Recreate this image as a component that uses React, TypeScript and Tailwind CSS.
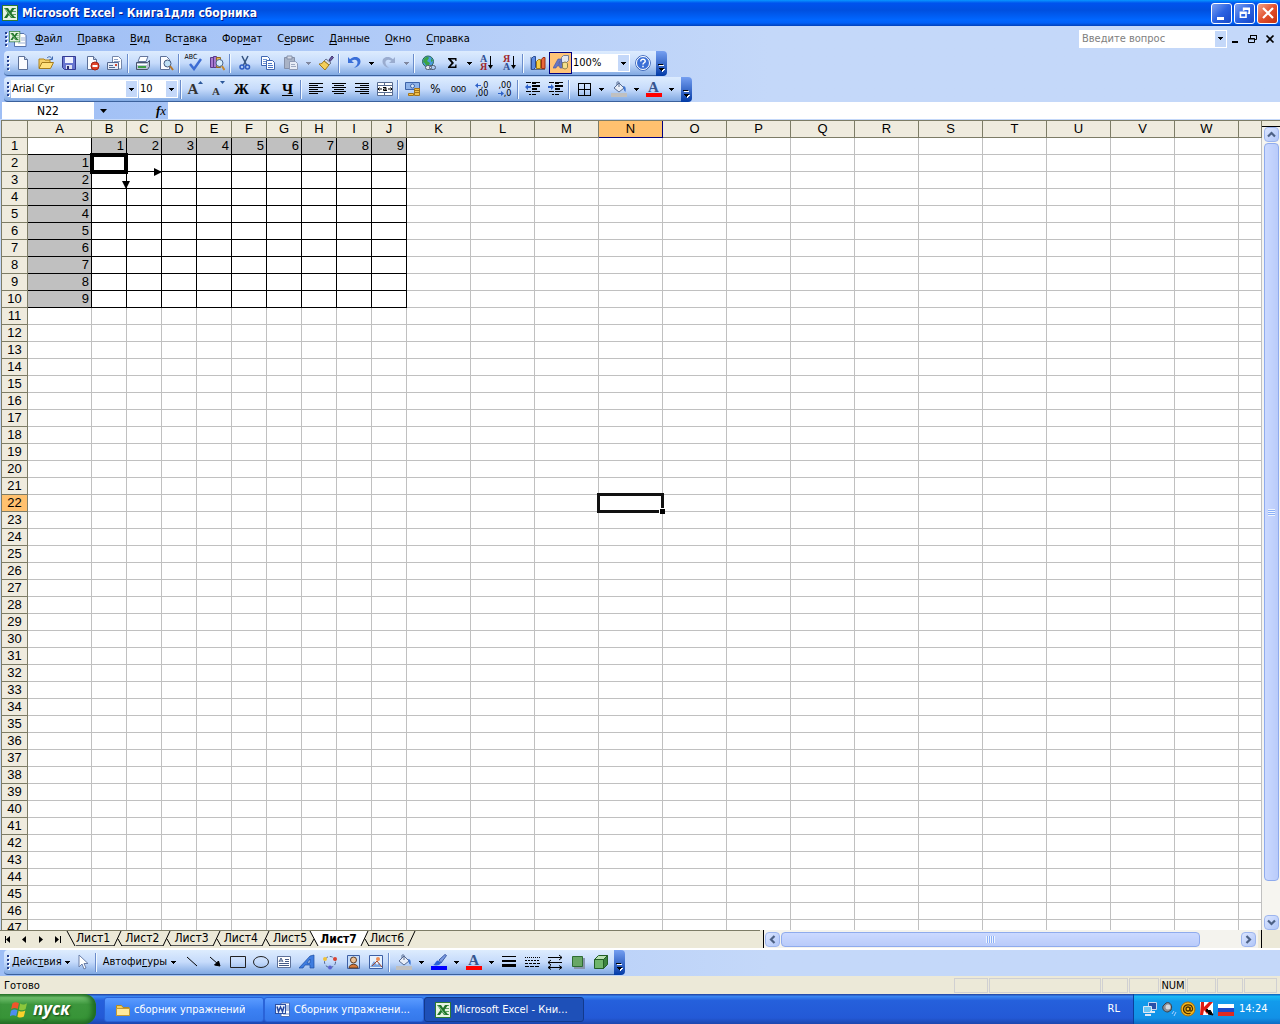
import type { ReactNode } from "react";

const columns = "ABCDEFGHIJKLMNOPQRSTUVWX".split("");
const rows = Array.from({ length: 47 }, (_, i) => i + 1);

// [text before the key, underlined key, text after it]
const menus = [
  ["", "Ф", "айл"],
  ["", "П", "равка"],
  ["", "В", "ид"],
  ["Вст", "а", "вка"],
  ["Фор", "м", "ат"],
  ["С", "е", "рвис"],
  ["", "Д", "анные"],
  ["", "О", "кно"],
  ["", "С", "правка"],
];

const sheets = ["Лист1", "Лист2", "Лист3", "Лист4", "Лист5", "Лист7", "Лист6"];

/* ---------- small building blocks ---------- */

function Icon({ children, size = "w-4 h-4", box = "0 0 16 16" }: { children: ReactNode; size?: string; box?: string }) {
  return (
    <svg className={`${size} shrink-0`} viewBox={box} fill="none" aria-hidden="true">
      {children}
    </svg>
  );
}

function Tool({ label, children, active }: { label: string; children: ReactNode; active?: boolean }) {
  return (
    <button
      aria-label={label}
      className={`flex h-[22px] w-[23px] shrink-0 items-center justify-center ${active ? "border border-[#000080] bg-[#ffc477]" : ""}`}
    >
      {children}
    </button>
  );
}

function Arrow({ label, dim }: { label: string; dim?: boolean }) {
  return (
    <button aria-label={label} className="flex h-[22px] w-3 shrink-0 items-center justify-center">
      <Caret color={dim ? "#8088a0" : "#000"} />
    </button>
  );
}

function Caret({ color = "#000" }: { color?: string }) {
  return (
    <svg width="5" height="3" viewBox="0 0 5 3" shapeRendering="crispEdges" aria-hidden="true">
      <path d="M0 0h5v1H0zM1 1h3v1H1zM2 2h1v1H2z" fill={color} />
    </svg>
  );
}

function Sep() {
  return <span className="ml-px mr-0.5 h-[19px] w-0.5 shrink-0 border-l border-[#6a8ccb] bg-[#f1f9ff]" />;
}

function Grip() {
  return (
    <svg width="7" height="20" viewBox="0 0 7 20" className="shrink-0" shapeRendering="crispEdges" aria-hidden="true">
      {[3, 7, 11, 15].map((y) => (
        <g key={y}>
          <path d={`M4 ${y + 1}h2v2h-2z`} fill="#fff" />
          <path d={`M3 ${y}h2v2h-2z`} fill="#27418f" />
        </g>
      ))}
    </svg>
  );
}

function Bar({ label, children }: { label: string; children: ReactNode }) {
  return (
    <div role="toolbar" aria-label={label} className="ml-1 flex h-[25px] w-fit">
      <div className="flex items-center rounded-l border-b border-[#3b619c] bg-gradient-to-b from-[#ddecfe] via-[#c6dbfb] to-[#81a9e2]">
        <Grip />
        {children}
      </div>
      <button
        aria-label="Параметры панелей инструментов"
        className="flex w-[11px] items-end justify-center rounded-r bg-gradient-to-b from-[#759ff1] to-[#003aa6] pb-1"
      >
        <svg width="7" height="8" viewBox="0 0 7 8" shapeRendering="crispEdges" aria-hidden="true">
          <path d="M1 1h5v1H1zM2 5h5v1H6v1H5v1H4V7H3V6H2z" fill="#fff" />
          <path d="M0 0h5v1H0zM1 4h5v1H5v1H4v1H3V6H2V5H1z" fill="#000" />
        </svg>
      </button>
    </div>
  );
}

function Combo({ label, value, width }: { label: string; value: string; width: string }) {
  return (
    <div className={`mr-px flex h-[18px] shrink-0 items-stretch border border-white bg-white ${width}`}>
      <select aria-label={label} className="min-w-0 flex-1 appearance-none bg-white leading-4 text-black">
        <option>{value}</option>
      </select>
      <span className="flex w-[11px] items-center justify-center bg-[#c4d8f9]">
        <Caret />
      </span>
    </div>
  );
}

/* ---------- icons ---------- */

const ExcelMark = () => (
  <>
    <rect x=".5" y=".5" width="15" height="15" fill="#e6f3e2" stroke="#2c7a35" />
    <path d="M10 3.500h4M10 6.500h4M11 9.500h3M10 12.500h4" stroke="#5da361" />
    <path d="M2 3h4l2 3 2-3h3L9.500 8l4 5H9L7 10l-2 3H2l3.500-5z" fill="#21752b" />
    <path d="M3 3.500l7 9" stroke="#8cc98e" />
  </>
);

const WordMark = () => (
  <>
    <path d="M6 1h8.500v13.500H6z" fill="#fff" stroke="#4a6db8" />
    <path d="M11 4h3M11 6h3M11 8h3M8 12h6" stroke="#6787c8" />
    <rect x=".5" y="2.500" width="10" height="9" fill="#e8effc" stroke="#2b4fa2" />
    <path d="M2 4.500l1.500 5L5.500 5l2 4.500 1.500-5" stroke="#2346a0" strokeWidth="1.500" />
  </>
);

const Page = () => (
  <>
    <path d="M3.500 1.500h6l3 3v10h-9z" fill="#fbfcff" stroke="#5c7098" />
    <path d="M9.500 1.500v3h3" fill="#c6d3ea" stroke="#5c7098" />
  </>
);

const Folder = () => (
  <>
    <path d="M1 13V4h5l1 1h5v3" fill="#f5d069" stroke="#b0821a" />
    <path d="M1 13.500L4 7.500h11.500l-3 6z" fill="#ffe07c" stroke="#a37b1c" />
    <path d="M9 3c2-2 4-1.500 5 1M14.500 1.500V4.500H11.500" stroke="#3d69b0" />
  </>
);

const Disk = () => (
  <>
    <path d="M1.500 1.500h13v13h-11l-2-2z" fill="#6775cf" stroke="#343b92" />
    <path d="M4 2h8v6H4z" fill="#eef1ff" />
    <path d="M5 10h6v4H5z" fill="#dfe2f2" />
    <path d="M6 11h2v3H6z" fill="#2b2f6f" />
  </>
);

const Denied = () => (
  <>
    <Page />
    <circle cx="11" cy="11" r="4" fill="#e2452b" stroke="#a32112" />
    <path d="M8.500 11h5" stroke="#fff" strokeWidth="2" />
  </>
);

const Mail = () => (
  <>
    <path d="M5.500 1.500h6l3 3V14h-9z" fill="#fff" stroke="#7486a8" />
    <path d="M7 4.500h4M7 6.500h6" stroke="#8fa2c5" />
    <path d="M.5 7.500h11v7H.5z" fill="#e5ecf8" stroke="#56698f" />
    <path d="M2 12.500h6M2 10.500h4" stroke="#56698f" />
    <path d="M8 9h2v2H8z" fill="#d44c34" />
  </>
);

const Printer = () => (
  <>
    <path d="M5 1.500h8l-2 5H3z" fill="#fff" stroke="#66779c" />
    <path d="M1.500 7.500h11l2-2v6l-2 3h-11z" fill="#b9c4d6" stroke="#46536d" />
    <path d="M2 9.500h10" stroke="#fff" />
    <path d="M3 12h8" stroke="#3f9f43" strokeWidth="2" />
  </>
);

const Preview = () => (
  <>
    <path d="M2.500 1.500h6l3 3v10h-9z" fill="#fbfcff" stroke="#5c7098" />
    <circle cx="9.500" cy="8.500" r="3.500" fill="#bfe0f5" stroke="#44597f" />
    <path d="M12 11l3 4" stroke="#b5762a" strokeWidth="2" />
  </>
);

const Spell = () => <path d="M4 9l4 5 7-10" stroke="#3d6cd3" strokeWidth="2.500" />;

const Research = () => (
  <>
    <path d="M1.500 2.500h3v10h-3zM4.500 1.500h3v11h-3z" fill="#a779cf" stroke="#5a3a8c" />
    <path d="M7.500 2.500h4v10h-4z" fill="#e7b657" stroke="#946d1e" />
    <circle cx="10.500" cy="8" r="3.500" fill="#d7edfb" stroke="#4b648c" />
    <path d="M13 11l2.500 4" stroke="#c8882c" strokeWidth="2" />
  </>
);

const Cut = () => (
  <>
    <path d="M5 1l4.500 9M11 1L6.500 10" stroke="#34537f" strokeWidth="1.500" />
    <circle cx="5" cy="12" r="2" stroke="#2d5bc0" strokeWidth="1.500" />
    <circle cx="10.500" cy="12" r="2" stroke="#2d5bc0" strokeWidth="1.500" />
  </>
);

const Copy = () => (
  <>
    <path d="M1.500 1.500h6l2 2v7h-8z" fill="#fff" stroke="#3f66b1" />
    <path d="M3 4.500h4M3 6.500h4M3 8.500h4" stroke="#6d92d4" />
    <path d="M6.500 5.500h6l2 2v7h-8z" fill="#fff" stroke="#3f66b1" />
    <path d="M8 8.500h4M8 10.500h5M8 12.500h5" stroke="#4d78c6" />
  </>
);

const Paste = () => (
  <>
    <path d="M1.500 2.500h10v11h-10z" fill="#a9b3c6" stroke="#8590a8" />
    <path d="M4 1h5v3H4z" fill="#d5dbe7" stroke="#8590a8" />
    <path d="M6.500 6.500h6l2 2v6h-8z" fill="#e8edf6" stroke="#8f9bb5" />
    <path d="M8 9.500h4M8 11.500h5" stroke="#9faac1" />
  </>
);

const Brush = () => (
  <>
    <path d="M11 5l3-4 1.500 1.500L12 6.500z" fill="#6f5ba7" stroke="#41346d" />
    <path d="M8 4l5 4-2 2-5-4z" fill="#d6dbe7" stroke="#6c7790" />
    <path d="M6 6l5 4-4 5-6-6c2 0 4-1 5-3z" fill="#f3cf5b" stroke="#a07a1c" />
  </>
);

const Undo = ({ color }: { color: string }) => (
  <path d="M2 2v6h6L5.500 5.700C9 3.500 12 5 11.500 8c-.3 2-1.500 3.500-3.500 5 4-1 6.500-3.500 6.500-6.500C14.500 2 8.500.5 4 4.200z" fill={color} />
);

const Globe = () => (
  <>
    <circle cx="7" cy="6.500" r="5.500" fill="#4a9be0" stroke="#2b6b59" />
    <path d="M3 4c2-3 5-2 5-1L6 6l3 2-2 4C4 11 5 8 2 7zM10 3l2 3-2 1z" fill="#3ba443" />
    <rect x="4.500" y="10.500" width="6" height="4" rx="2" fill="#dfe5ee" stroke="#4f5c75" />
    <rect x="8.500" y="10.500" width="6" height="4" rx="2" stroke="#4f5c75" />
  </>
);

const Sort = ({ top, bottom, topColor, bottomColor }: { top: string; bottom: string; topColor: string; bottomColor: string }) => (
  <span className="flex items-center gap-px">
    <span className="flex flex-col font-['Liberation_Serif',serif] text-[10px] font-bold leading-[8px]">
      <span style={{ color: topColor }}>{top}</span>
      <span style={{ color: bottomColor }}>{bottom}</span>
    </span>
    <Icon size="w-[5px] h-4" box="0 0 5 16">
      <path d="M2.500 1v11" stroke="#000" />
      <path d="M0 10h5L2.500 14z" fill="#000" />
    </Icon>
  </span>
);

const Chart = () => (
  <>
    <path d="M1 2v12.500h14" stroke="#56688b" />
    <path d="M1.500 3.500l2-2h2v11l-2 2h-2z" fill="#5c8be0" stroke="#2a4c93" />
    <path d="M6.500 6.500l2-2h2v9h-4z" fill="#f6cd48" stroke="#a17a13" />
    <path d="M11.500 4.500l1.500-2h2v11h-3.500z" fill="#e8663a" stroke="#9c3015" />
  </>
);

const Shapes = () => (
  <>
    <path d="M8.500 2.500l2-2h5v5l-2 2h-5z" fill="#e4e6ee" stroke="#777f94" />
    <path d="M0 13L5 4h3l2 9H7l-.5-2H4l-1 2zM5 9h1.500V6.500z" fill="#6878c4" stroke="#4153a3" strokeWidth=".6" fillRule="evenodd" />
    <path d="M9.500 9c0-2.500 5-2.500 5 0v3c0 2.500-5 2.500-5 0z" fill="#f3df8d" stroke="#8d8048" />
  </>
);

const Help = () => (
  <>
    <circle cx="8" cy="8" r="7.300" stroke="#2a56b0" />
    <circle cx="8" cy="8" r="6.500" fill="#3c70d6" stroke="#fff" />
    <path d="M5.800 6.500C5.500 3.500 10.500 3.500 10.200 6.300 10 7.800 8 7.800 8 9.500M8 10.800v1.500" stroke="#fff" strokeWidth="1.500" />
  </>
);

const Lines = ({ d }: { d: string }) => <path d={d} stroke="#000" shapeRendering="crispEdges" />;

const Merge = () => (
  <>
    <path d="M.5 1.500h15v13H.5z" fill="#fff" stroke="#576b8f" />
    <path d="M.5 4.500h15M.5 11.500h15M7.500 1.500v3M7.500 11.500v3" stroke="#576b8f" />
    <path d="M1 8h4M2.500 6.500L1 8l1.500 1.500M15 8h-4M13.500 6.500L15 8l-1.500 1.500" stroke="#000" />
    <path d="M6 6.500h3v3H6.500V8H9M9 9.500h1" stroke="#000" />
  </>
);

const Money = () => (
  <>
    <path d="M.5 1.500h14v7H.5z" fill="#8eb3ea" stroke="#3d63a9" />
    <circle cx="7.500" cy="5" r="2" fill="#dce9fb" stroke="#3d63a9" />
    <path d="M9.500 7.500h5v7h-5zM3.500 12.500h5v2h-5z" fill="#f2c04a" stroke="#a3731a" />
    <path d="M9 9.500h5M9 11.500h5" stroke="#a3731a" />
  </>
);

const Decimals = ({ less }: { less?: boolean }) => (
  <span className="flex flex-col items-end text-[9px] leading-[8px]">
    {[less ? ",00" : ",0", less ? ",0" : ",00"].map((t) => (
      <span key={t} className="flex items-center">
        {t === ",0" && (
          <Icon size="w-1.5 h-[5px]" box="0 0 6 5">
            <path d={less ? "M6 2.500L3 0v2H0v1h3v2z" : "M0 2.500L3 0v2h3v1H3v2z"} fill="#2f62c8" />
          </Icon>
        )}
        {t}
      </span>
    ))}
  </span>
);

const Indent = ({ out }: { out?: boolean }) => (
  <>
    <path d="M1 1.500h5M7 1.500h8M7 4.500h8M7 7.500h5M1 10.500h5M7 10.500h8M7 13.500h4M4 13.500h2" stroke="#000" shapeRendering="crispEdges" />
    <path d="M7 5.500h8M7 2.500h4M7 8.500h5" stroke="#000" shapeRendering="crispEdges" />
    <path d={out ? "M0 6l3-3v2h3v2H3v2z" : "M6 6L3 3v2H0v2h3v2z"} fill="#2f62c8" />
  </>
);

const Bucket = () => (
  <>
    <path d="M3 7l5-5 5 5-5 4z" fill="#e9eef7" stroke="#566a90" />
    <path d="M6 4V1.500c0-1 2-1 2 0V6" stroke="#566a90" />
    <path d="M12 5c3 0 3 3 2.500 6-1-1-2-2-2-4z" fill="#3f76d3" />
    <path d="M0 12h16v4H0z" fill="#c0c0c0" />
  </>
);

const LineColor = () => (
  <>
    <path d="M8 6l6-5.500 1.500 1L10 9z" fill="#7b9be0" stroke="#3a5aa8" />
    <path d="M2 11c2 0 2-4 5-4.500l3 2.500c-1 2.500-5 3-8 2z" fill="#2b63d8" />
    <path d="M0 12h16v4H0z" fill="#00f" />
  </>
);

const FontColor = () => (
  <span className="flex w-4 flex-col items-center">
    <span className="font-['Liberation_Serif',serif] text-[15px] font-bold leading-3 text-[#35558f]">A</span>
    <span className="h-1 w-full bg-[#f00]" />
  </span>
);

const Cube = () => (
  <>
    <path d="M1.500 5.500h9v9h-9z" fill="#6fb56c" stroke="#235f27" />
    <path d="M1.500 5.500l4-4h9l-4 4z" fill="#b9e0b3" stroke="#235f27" />
    <path d="M10.500 5.500l4-4v9l-4 4z" fill="#3c843f" stroke="#235f27" />
  </>
);

const windowPaths = {
  min: "M3 12h7v3H3z",
  restore: "M6 2h9v8h-3V8h1V5H8v1H6zM2 7h9v8H2zm2 3v3h5v-3z",
};

/* ---------- window chrome ---------- */

function TitleBar() {
  const frame = "flex h-[21px] w-[21px] items-center justify-center rounded-[3px] border border-white";
  return (
    <header className="flex h-[26px] shrink-0 items-center bg-[linear-gradient(#0997ff_0%,#0053ee_12%,#0050e0_40%,#0066ff_75%,#0060f8_88%,#0040ba_100%)] pl-0.5 pr-0.5">
      <Icon>
        <ExcelMark />
      </Icon>
      <h1 className="ml-1 flex-1 font-['DejaVu_Sans_Condensed',sans-serif] text-[12px] font-bold text-white [text-shadow:1px_1px_#0a1883]">
        Microsoft Excel - Книга1для сборника
      </h1>
      <div className="flex gap-0.5">
        <button aria-label="Свернуть" className={`${frame} bg-gradient-to-br from-[#7d9ff0] via-[#2b63e2] to-[#1848c8]`}>
          <Icon>
            <path d={windowPaths.min} fill="#fff" />
          </Icon>
        </button>
        <button aria-label="Восстановить" className={`${frame} bg-gradient-to-br from-[#7d9ff0] via-[#2b63e2] to-[#1848c8]`}>
          <Icon>
            <path d={windowPaths.restore} fill="#fff" fillRule="evenodd" transform="translate(1 1) scale(.8)" />
          </Icon>
        </button>
        <button aria-label="Закрыть" className={`${frame} bg-gradient-to-br from-[#f0a084] via-[#e2502c] to-[#c5300c]`}>
          <Icon>
            <path d="M3 3l10 10M13 3L3 13" stroke="#fff" strokeWidth="2.200" />
          </Icon>
        </button>
      </div>
    </header>
  );
}

function MenuBar() {
  return (
    <div className="flex h-[25px] items-center">
      <span className="ml-0.5 flex items-center">
        <Grip />
        <Icon size="w-[18px] h-4" box="0 0 18 16">
          <path d="M8 2.500h7l2 2v11H5.500V10" fill="#fff" stroke="#5673ad" />
          <path d="M12 7h4M12 9h4M9 12h7" stroke="#9db1d6" />
          <g transform="scale(.7)">
            <ExcelMark />
          </g>
        </Icon>
      </span>
      <nav className="ml-2 flex flex-1 gap-[15px]">
        {menus.map(([a, key, b]) => (
          <button key={a + key + b} className="whitespace-nowrap">
            {a}
            <span className="underline underline-offset-2">{key}</span>
            {b}
          </button>
        ))}
      </nav>
      <div className="flex h-[18px] w-[148px] border border-white bg-white">
        <input aria-label="Вопрос" placeholder="Введите вопрос" className="min-w-0 flex-1 px-0.5 placeholder:text-[#808080]" />
        <button aria-label="Список вопросов" className="flex w-[11px] items-center justify-center bg-[#c4d8f9]">
          <Caret />
        </button>
      </div>
      <div className="flex items-center gap-1.5 pl-px pr-1">
        <button aria-label="Свернуть книгу">
          <Icon size="w-3 h-3" box="0 0 12 12">
            <path d="M4 8h6v2H4z" fill="#000" />
          </Icon>
        </button>
        <button aria-label="Восстановить книгу">
          <Icon size="w-3 h-3" box="0 0 12 12">
            <path d="M4.500 5V2.500h6v4H9M4 2.500h7M2.500 5.500h6v4h-6zM2 6h7" stroke="#000" />
          </Icon>
        </button>
        <button aria-label="Закрыть книгу">
          <Icon size="w-3 h-3" box="0 0 12 12">
            <path d="M2.500 2.500l7 7M9.500 2.500l-7 7" stroke="#000" strokeWidth="1.700" />
          </Icon>
        </button>
      </div>
    </div>
  );
}

function StandardBar() {
  return (
    <Bar label="Стандартная">
      <Tool label="Создать"><Icon><Page /></Icon></Tool>
      <Tool label="Открыть"><Icon><Folder /></Icon></Tool>
      <Tool label="Сохранить"><Icon><Disk /></Icon></Tool>
      <Tool label="Разрешения"><Icon><Denied /></Icon></Tool>
      <Tool label="Сообщение"><Icon><Mail /></Icon></Tool>
      <Sep />
      <Tool label="Печать"><Icon><Printer /></Icon></Tool>
      <Tool label="Просмотр"><Icon><Preview /></Icon></Tool>
      <Sep />
      <Tool label="Орфография">
        <span className="relative">
          <Icon><Spell /></Icon>
          <span className="absolute -left-px -top-0.5 text-[7px] leading-[8px]">ABC</span>
        </span>
      </Tool>
      <Tool label="Справочные материалы"><Icon><Research /></Icon></Tool>
      <Sep />
      <Tool label="Вырезать"><Icon><Cut /></Icon></Tool>
      <Tool label="Копировать"><Icon><Copy /></Icon></Tool>
      <Tool label="Вставить"><Icon><Paste /></Icon></Tool>
      <Arrow label="Варианты вставки" dim />
      <Tool label="Формат по образцу"><Icon><Brush /></Icon></Tool>
      <Sep />
      <Tool label="Отменить"><Icon><Undo color="#3a6fd8" /></Icon></Tool>
      <Arrow label="Список отмены" />
      <Tool label="Вернуть">
        <Icon><g transform="matrix(-1 0 0 1 16 0)"><Undo color="#9aaccf" /></g></Icon>
      </Tool>
      <Arrow label="Список возврата" dim />
      <Sep />
      <Tool label="Гиперссылка"><Icon><Globe /></Icon></Tool>
      <Tool label="Автосумма">
        <Icon><path d="M4 3h8.500v3h-1L11 4.500H7L10 8l-3.500 3.500H11l.5-2h1V13H4v-1l3.500-4L4 4z" fill="#000" /></Icon>
      </Tool>
      <Arrow label="Функции" />
      <Tool label="По возрастанию"><Sort top="А" bottom="Я" topColor="#2f4f93" bottomColor="#a0262b" /></Tool>
      <Tool label="По убыванию"><Sort top="Я" bottom="А" topColor="#a0262b" bottomColor="#2f4f93" /></Tool>
      <Sep />
      <Tool label="Диаграмма"><Icon><Chart /></Icon></Tool>
      <Tool label="Рисование" active><Icon><Shapes /></Icon></Tool>
      <Combo label="Масштаб" value="100%" width="w-[58px]" />
      <Tool label="Справка Excel"><Icon><Help /></Icon></Tool>
      <span className="w-0.5" />
    </Bar>
  );
}

function FormattingBar() {
  const letter = "font-['Liberation_Serif',serif] text-[15px] font-bold leading-4";
  return (
    <Bar label="Форматирование">
      <Combo label="Шрифт" value="Arial Cyr" width="w-[127px]" />
      <Combo label="Размер" value="10" width="w-[39px]" />
      <Sep />
      <Tool label="Увеличить размер">
        <span className="flex items-start">
          <span className={`${letter} text-[#333]`}>A</span>
          <Icon size="w-[5px] h-[3px]" box="0 0 5 3"><path d="M2.500 0L5 3H0z" fill="#2b579a" /></Icon>
        </span>
      </Tool>
      <Tool label="Уменьшить размер">
        <span className="flex items-start">
          <span className="pt-1 font-['Liberation_Serif',serif] text-[11px] font-bold leading-3 text-[#333]">A</span>
          <Icon size="w-[5px] h-[3px]" box="0 0 5 3"><path d="M0 0h5L2.500 3z" fill="#2b579a" /></Icon>
        </span>
      </Tool>
      <Tool label="Полужирный"><span className={letter}>Ж</span></Tool>
      <Tool label="Курсив"><span className={`${letter} italic`}>К</span></Tool>
      <Tool label="Подчеркнутый"><span className={`${letter} underline`}>Ч</span></Tool>
      <Sep />
      <Tool label="По левому краю"><Icon><Lines d="M1 2.500h14M1 4.500h9M1 6.500h14M1 8.500h9M1 10.500h14M1 12.500h9" /></Icon></Tool>
      <Tool label="По центру"><Icon><Lines d="M1 2.500h14M3 4.500h10M1 6.500h14M3 8.500h10M1 10.500h14M3 12.500h10" /></Icon></Tool>
      <Tool label="По правому краю"><Icon><Lines d="M1 2.500h14M6 4.500h9M1 6.500h14M6 8.500h9M1 10.500h14M6 12.500h9" /></Icon></Tool>
      <Tool label="Объединить"><Icon><Merge /></Icon></Tool>
      <Sep />
      <Tool label="Денежный формат"><Icon><Money /></Icon></Tool>
      <Tool label="Процентный формат"><span className="text-[12px]">%</span></Tool>
      <Tool label="Формат с разделителями"><span className="font-['Liberation_Sans',sans-serif] text-[9px]">000</span></Tool>
      <Tool label="Увеличить разрядность"><Decimals /></Tool>
      <Tool label="Уменьшить разрядность"><Decimals less /></Tool>
      <Sep />
      <Tool label="Уменьшить отступ"><Icon><Indent out /></Icon></Tool>
      <Tool label="Увеличить отступ"><Icon><Indent /></Icon></Tool>
      <Sep />
      <Tool label="Границы"><Icon><Lines d="M2.500 2.500h12v12h-12zM8.500 2.500v12M2.500 8.500h12" /></Icon></Tool>
      <Arrow label="Виды границ" />
      <Tool label="Цвет заливки"><Icon><Bucket /></Icon></Tool>
      <Arrow label="Цвета заливки" />
      <Tool label="Цвет шрифта"><FontColor /></Tool>
      <Arrow label="Цвета шрифта" />
      <span className="w-1" />
    </Bar>
  );
}

function FormulaBar() {
  return (
    <div className="flex h-[17px] pl-0.5">
      <input aria-label="Имя ячейки" defaultValue="N22" className="w-[92px] bg-white text-center text-[12px]" />
      <button aria-label="Список имен" className="flex w-[18px] items-center justify-center">
        <svg width="7" height="4" viewBox="0 0 7 4" aria-hidden="true"><path d="M0 0h7L3.500 4z" /></svg>
      </button>
      <button aria-label="Вставить функцию" className="w-14 pr-0.5 text-right font-['Liberation_Serif',serif] text-[13px] italic leading-4">
        <b>f</b>x
      </button>
      <input aria-label="Строка формул" className="min-w-0 flex-1 bg-white" />
    </div>
  );
}

/* ---------- sheet ---------- */

function StepArrows() {
  return (
    <svg className="absolute left-0 top-0 z-10 h-[40px] w-[76px] overflow-visible" viewBox="0 0 76 40" aria-hidden="true">
      <path d="M0 0H34V17H0z" fill="none" stroke="#000" strokeWidth="4" />
      <path d="M62 13l8 4-8 4zM30 26h8l-4 8z" fill="#000" />
    </svg>
  );
}

function cellClass(row: number, col: number) {
  if (row > 10 || col > 9) return "border-[#c0c0c0]";
  if (row === 1 && col === 0) return "border-black";
  if (row === 1 || col === 0) return "border-black bg-[#c0c0c0]";
  return "border-black";
}

function cellText(row: number, col: number) {
  if (row === 1 && col > 0 && col < 10) return col;
  if (col === 0 && row > 1 && row < 11) return row - 1;
  return null;
}

function Sheet() {
  const head = "h-[17px] overflow-hidden border-b border-r border-[#7d7c66] p-0 text-center font-normal leading-4";
  return (
    <div className="min-w-0 flex-1 overflow-hidden border-l border-t border-[#7d7c66] bg-white">
      <table className="w-full table-fixed border-separate border-spacing-0 font-['Liberation_Sans',sans-serif] text-[13px]">
        <colgroup>
          <col className="w-[26px]" />
          {columns.map((c, i) => (
            <col key={c} className={i === 23 ? "" : i > 0 && i < 10 ? "w-[35px]" : "w-[64px]"} />
          ))}
        </colgroup>
        <thead>
          <tr>
            <th className={`${head} bg-[#efebde]`} />
            {columns.map((c) => (
              <th key={c} scope="col" className={`${head} ${c === "N" ? "bg-[#ffc16f] border-[#000080]" : "bg-[#efebde]"}`}>
                {c === "X" ? "" : c}
              </th>
            ))}
          </tr>
        </thead>
        <tbody>
          {rows.map((r) => (
            <tr key={r}>
              <th scope="row" className={`${head} ${r === 22 ? "bg-[#ffc16f]" : "bg-[#efebde]"}`}>{r}</th>
              {columns.map((c, i) => (
                <td key={c} className={`relative h-[17px] border-b border-r p-0 pr-0.5 text-right leading-4 ${cellClass(r, i)}`}>
                  {cellText(r, i)}
                  {r === 2 && c === "B" && <StepArrows />}
                  {r === 22 && c === "N" && (
                    <span className="absolute -bottom-0.5 -left-0.5 -right-0.5 -top-0.5 z-10 border-[3px] border-[#111]">
                      <span className="absolute -bottom-1 -right-1 h-1.5 w-1.5 border-l border-t border-white bg-black" />
                    </span>
                  )}
                </td>
              ))}
            </tr>
          ))}
        </tbody>
      </table>
    </div>
  );
}

function ScrollButton({ label, d }: { label: string; d: string }) {
  return (
    <button
      aria-label={label}
      className="flex h-[15px] w-[15px] shrink-0 items-center justify-center rounded-sm border border-[#9db5ee] bg-gradient-to-br from-[#dce6ff] to-[#b0c6f8]"
    >
      <svg width="9" height="9" viewBox="0 0 9 9" fill="none" aria-hidden="true">
        <path d={d} stroke="#4d6185" strokeWidth="2.200" />
      </svg>
    </button>
  );
}

function VerticalScroll() {
  return (
    <div className="flex w-[18px] shrink-0 flex-col items-center border-t border-[#7d7c66] bg-[#f6f5f0]">
      <span className="h-1.5 w-full border-b border-black bg-[#ece9d8]" />
      <ScrollButton label="Вверх" d="M1 6.500L4.500 3 8 6.500" />
      <div className="flex w-[15px] flex-1 flex-col pt-px">
        <div className="flex flex-[737] items-center justify-center rounded-sm border border-[#8fabed] bg-gradient-to-r from-[#cbd9ff] to-[#b9cbfa]">
          <span className="h-[7px] w-[7px] bg-[repeating-linear-gradient(#eef4fe_0_1px,#8cb0f8_1px_2px)]" />
        </div>
        <div className="flex-[34]" />
      </div>
      <ScrollButton label="Вниз" d="M1 2.500L4.500 6 8 2.500" />
    </div>
  );
}

// slanted edge between two tabs; the active tab lies on top of its neighbours
function TabEdge({ on, nextOn }: { on: boolean; nextOn: boolean }) {
  const w = on || nextOn ? 13 : 15;
  return (
    <svg width={w} height="16" viewBox={`0 0 ${w} 16`} fill="none" aria-hidden="true">
      {on && <path d="M0 0h11L4 15H0z" fill="#fff" />}
      {nextOn && <path d="M3 0h10v15h-2z" fill="#fff" />}
      {nextOn ? (
        <>
          <path d="M0 14.500h3" stroke="#555" />
          <path d="M3 0l8 15M3 15l4-7" stroke="#000" />
        </>
      ) : (
        <>
          {!on && <path d="M0 14.500h4" stroke="#555" />}
          <path d={`M11 14.500h${w - 11}`} stroke="#555" />
          <path d="M11 0L4 15M8 8l4 7" stroke="#000" />
        </>
      )}
    </svg>
  );
}

function SheetTabs() {
  const nav = ["M1 0h1v7H1zM6 0v7L2 3.500z", "M5 0v7L1 3.500z", "M2 0v7l4-3.500z", "M6 0h1v7H6zM1 0v7l4-3.500z"];
  const labels = ["Первый лист", "Предыдущий лист", "Следующий лист", "Последний лист"];
  return (
    <div className="flex h-[18px] shrink-0 bg-[#ece9d8]">
      <div className="flex min-w-0 flex-[760] border-t border-[#7d7c66]">
        <div className="flex w-[66px] shrink-0">
          {nav.map((d, i) => (
            <button key={d} aria-label={labels[i]} className="flex h-4 flex-1 items-center justify-center">
              <svg width="8" height="7" viewBox="0 0 8 7" aria-hidden="true"><path d={d} /></svg>
            </button>
          ))}
        </div>
        <div role="tablist" className="flex">
          {sheets.map((s, i) => {
            const on = s === "Лист7";
            return (
              <div key={s} className="flex">
                {i === 0 && (
                  <svg width="10" height="16" viewBox="0 0 10 16" aria-hidden="true">
                    <path d="M1 0l8 15" stroke="#000" />
                  </svg>
                )}
                <button
                  role="tab"
                  aria-selected={on}
                  className={`h-[15px] whitespace-nowrap text-[12px] leading-[14px] ${on ? "bg-white font-bold" : "border-b border-[#555]"}`}
                >
                  {s}
                </button>
                {i === sheets.length - 1 ? (
                  <svg width="13" height="16" viewBox="0 0 13 16" aria-hidden="true">
                    <path d="M11 0L4 15" stroke="#000" />
                  </svg>
                ) : (
                  <TabEdge on={on} nextOn={sheets[i + 1] === "Лист7"} />
                )}
              </div>
            );
          })}
        </div>
      </div>
      <div className="flex min-w-0 flex-[502] items-center bg-[#f4f3ee]">
        <span className="mr-px h-full w-1 border-r border-black bg-[#ece9d8]" />
        <ScrollButton label="Влево" d="M6.500 1L3 4.500 6.500 8" />
        <div className="ml-px flex h-[15px] flex-1">
          <div className="flex flex-[418] items-center justify-center rounded-sm border border-[#8fabed] bg-gradient-to-b from-[#cbd9ff] to-[#b9cbfa]">
            <span className="h-[7px] w-[9px] bg-[repeating-linear-gradient(90deg,#eef4fe_0_1px,#8cb0f8_1px_2px)]" />
          </div>
          <div className="flex-[41]" />
        </div>
        <ScrollButton label="Вправо" d="M2.500 1L6 4.500 2.500 8" />
        <span className="ml-0.5 h-full w-1 border-r border-black bg-[#ece9d8]" />
      </div>
      <div className="w-[18px] shrink-0" />
    </div>
  );
}

function DrawingBar() {
  return (
    <Bar label="Рисование">
      <button className="flex items-center gap-[3px] whitespace-nowrap px-px">
        <span>Дейс<u>т</u>вия</span>
        <Caret />
      </button>
      <Tool label="Выбор объектов">
        <Icon><path d="M5 1v12l3-3 2 5 2-1-2-4.500h4z" fill="#fff" stroke="#6b7fa8" /></Icon>
      </Tool>
      <Sep />
      <button className="flex items-center gap-1 whitespace-nowrap pl-1 pr-0.5">
        <span>Автофи<u>г</u>уры</span>
        <Caret />
      </button>
      <span className="w-0.5" />
      <Tool label="Линия"><Icon><path d="M3 3l10 9" stroke="#000" /></Icon></Tool>
      <Tool label="Стрелка"><Icon><path d="M3 3l8 7M13 12l-1.500-5-4 4z" stroke="#000" fill="#000" /></Icon></Tool>
      <Tool label="Прямоугольник"><Icon><path d="M.5 2.500h15v11H.5z" stroke="#222" /></Icon></Tool>
      <Tool label="Овал"><Icon><ellipse cx="8" cy="8" rx="7.500" ry="5.500" stroke="#222" /></Icon></Tool>
      <Tool label="Надпись">
        <Icon>
          <path d="M1.500 2.500h13v11h-13z" fill="#fff" stroke="#5d7199" />
          <path d="M3 8l2-4 2 4M4 7h2M9 5.500h4M9 7.500h4M3 9.500h10M3 11.500h10" stroke="#445a86" />
        </Icon>
      </Tool>
      <Tool label="Объект WordArt">
        <Icon><path d="M0 14L11 2l4-1v13h-4v-3H6l-2 3zM8 9h3V5z" fill="#3f7de0" stroke="#1c4da0" strokeWidth=".7" fillRule="evenodd" /></Icon>
      </Tool>
      <Tool label="Организационная диаграмма">
        <Icon>
          <circle cx="8" cy="8" r="5.500" stroke="#4b628f" strokeDasharray="3 2" />
          <circle cx="3" cy="5" r="2" fill="#efc13c" />
          <circle cx="13" cy="5" r="2" fill="#d84432" />
          <circle cx="8" cy="13.500" r="2" fill="#5b62cf" />
        </Icon>
      </Tool>
      <Tool label="Картинка">
        <Icon>
          <path d="M2.500 1.500h12v13h-12z" fill="#c6dcf8" stroke="#3c5fa4" />
          <circle cx="8.500" cy="6" r="3" fill="#ecc49b" stroke="#5c3a22" />
          <path d="M4 14c0-5 9-5 9 0z" fill="#d6793a" stroke="#5c3a22" />
        </Icon>
      </Tool>
      <Tool label="Рисунок">
        <Icon>
          <path d="M1.500 1.500h13v13h-13z" fill="#e6f1fe" stroke="#3c5fa4" />
          <path d="M2 13l4-6 3 4 2-2 3 4z" fill="#7ba3dd" />
          <circle cx="10" cy="5" r="2" fill="#eb8b52" />
          <path d="M4 12l5-5 5 6" stroke="#a84a2c" />
        </Icon>
      </Tool>
      <Sep />
      <Tool label="Заливка"><Icon><Bucket /></Icon></Tool>
      <Arrow label="Цвета заливки фигуры" />
      <Tool label="Цвет линий"><Icon><LineColor /></Icon></Tool>
      <Arrow label="Цвета линий" />
      <Tool label="Цвет текста"><FontColor /></Tool>
      <Arrow label="Цвета текста" />
      <Tool label="Тип линии">
        <Icon><path d="M1 2h14v1H1zM1 6h14v2H1zM1 10h14v3H1z" fill="#000" /></Icon>
      </Tool>
      <Tool label="Тип штриха">
        <Icon>
          <path d="M1 3.500h15" stroke="#000" strokeDasharray="1 1" />
          <path d="M1 6.500h15" stroke="#000" strokeDasharray="2 1" />
          <path d="M1 9.500h15" stroke="#000" strokeDasharray="3 1" />
          <path d="M1 12.500h15" stroke="#000" strokeDasharray="4 1" />
        </Icon>
      </Tool>
      <Tool label="Вид стрелки">
        <Icon>
          <path d="M1 3.500h14M12 1l3 2.500L12 6M15 8.500H1M4 6L1 8.500 4 11M1 13.500h14M12 11.500l3 2-3 2M4 11.500l-3 2 3 2" stroke="#000" />
        </Icon>
      </Tool>
      <Tool label="Тень">
        <Icon>
          <path d="M4 4h11v11H4z" fill="#8795ac" />
          <path d="M2.500 2.500h10v10h-10z" fill="#68a765" stroke="#2e6c33" />
        </Icon>
      </Tool>
      <Tool label="Объем"><Icon><Cube /></Icon></Tool>
      <span className="w-0.5" />
    </Bar>
  );
}

function StatusBar() {
  const box = "h-[15px] border border-[#d0d0d2]";
  return (
    <div className="flex h-[18px] shrink-0 items-center gap-px bg-[#ece9d8] pl-1 pr-[3px] pt-px">
      <span className="flex-1">Готово</span>
      <span className={`${box} w-[34px]`} />
      <span className={`${box} w-28`} />
      <span className={`${box} w-[26px]`} />
      <span className={`${box} w-[30px]`} />
      <span className={`${box} w-[26px] text-center leading-[14px]`}>NUM</span>
      <span className={`${box} w-[29px]`} />
      <span className={`${box} w-[26px]`} />
      <span className={`${box} w-[33px]`} />
    </div>
  );
}

/* ---------- taskbar ---------- */

function Task({ icon, text, active }: { icon: ReactNode; text: string; active?: boolean }) {
  return (
    <button
      className={`flex h-[25px] min-w-0 flex-[0_1_160px] items-center gap-[3px] rounded-[3px] border px-2.5 ${
        active ? "border-[#12398c] bg-[#1e50b8]" : "border-[#2a63d8] bg-gradient-to-b from-[#5a9bff] via-[#3c81f3] to-[#3578ea]"
      }`}
    >
      <Icon>{icon}</Icon>
      <span className="truncate">{text}</span>
    </button>
  );
}

function Taskbar() {
  return (
    <footer className="flex h-[30px] shrink-0 items-stretch bg-[linear-gradient(#1f3f9c_0%,#3b86f2_8%,#2560dc_22%,#2359d6_80%,#1c46ae_100%)] text-white">
      <button className="mr-2 flex w-24 shrink-0 items-center gap-1 rounded-r-xl bg-[linear-gradient(#2c7a2c_0%,#6fbf6c_12%,#3c963c_35%,#379437_80%,#286f28_100%)] pl-2.5 shadow-[inset_-4px_0_5px_#1e6a22]">
        <Icon size="w-[19px] h-[19px]">
          <path d="M2 3c2-1.500 3.500-1.300 5.500-.3L6.500 7.500C4.500 6.500 3 6.500 1 7.800z" fill="#f0552b" />
          <path d="M8.500 3c2 1 3.500 1 5.800-.3l-1.200 5c-2 1.200-3.600 1.200-5.600.2z" fill="#8cc63c" />
          <path d="M.8 9c2-1.300 3.500-1.300 5.500-.3L5.200 13.500c-2-1-3.500-1-5.400.3z" fill="#4d8df0" />
          <path d="M7.300 9c2 1 3.600 1 5.600-.2l-1.200 5c-2 1.200-3.500 1.200-5.500.2z" fill="#fbd12c" />
        </Icon>
        <span className="font-['Open_Sans',sans-serif] text-[17px] font-bold italic leading-5 [text-shadow:1px_1px_2px_#123f12]">пуск</span>
      </button>
      <nav className="flex min-w-0 flex-1 items-center pt-px">
        <Task
          text="сборник упражнений"
          icon={
            <>
              <path d="M1.500 3.500h5l1.500 2h6v8h-12.500z" fill="#f5cf5f" stroke="#b38a22" />
              <path d="M1.500 6.500h13v7h-13z" fill="#ffe99b" stroke="#c39a34" />
            </>
          }
        />
        <Task text="Сборник упражнени..." icon={<WordMark />} />
        <Task text="Microsoft Excel - Кни..." icon={<ExcelMark />} active />
      </nav>
      <span className="self-center px-[13px]">RL</span>
      <div className="flex w-[147px] shrink-0 items-center gap-[3px] border-l border-[#0b3f9c] bg-[linear-gradient(#0c59b9_0%,#19b9f5_8%,#129bec_25%,#1291e6_80%,#0d6bc4_100%)] pl-2">
        <Icon>
          <path d="M6.500 1.500h8v7h-8z" fill="#2a4fa8" stroke="#c9d6ee" />
          <path d="M1.500 5.500h8v6h-8z" fill="#6cc7f4" stroke="#dfe8f5" />
          <path d="M3 14h6M8 11h5" stroke="#dfe8f5" strokeWidth="2" />
        </Icon>
        <Icon>
          <path d="M2 5l3-3c4-2 7 3 5 7l-3 2C3 11 1 8 2 5z" fill="#8b8f96" stroke="#3c3f46" />
          <circle cx="7" cy="6" r="2.500" fill="#d5d7dc" />
          <path d="M11 13l2-3M13 15l2-4" stroke="#a9cfff" />
        </Icon>
        <Icon>
          <circle cx="8" cy="8" r="7" fill="#f6b71c" stroke="#a56c08" />
          <circle cx="8" cy="8" r="2" stroke="#4f3200" strokeWidth="1.300" />
          <path d="M10 6v3c0 2 3 1 2.500-1.500C12 2.500 4 2.500 3.500 8c0 4.500 5 5.500 7 4" stroke="#4f3200" strokeWidth="1.300" />
        </Icon>
        <Icon>
          <path d="M1 1h13v13H1z" fill="#fff" />
          <path d="M2 1h3v5l5-5h4L8 8l2 3-2 2-3-4-1 5H1z" fill="#e01b12" />
          <path d="M8 8l2 2 1-1 3 5-5-1 1-1-3-2z" fill="#000" stroke="#000" />
        </Icon>
        <Icon>
          <path d="M0 3h16v4H0z" fill="#fff" />
          <path d="M0 7h16v4H0z" fill="#1f48c8" />
          <path d="M0 11h16v4H0z" fill="#e02a20" />
        </Icon>
        <time className="ml-0.5">14:24</time>
      </div>
    </footer>
  );
}

export default function App() {
  return (
    <div className="flex h-screen flex-col overflow-hidden bg-[#c4d8f9] font-['DejaVu_Sans_Condensed','Noto_Sans',sans-serif] text-[11px] leading-4 text-black">
      <TitleBar />
      <div className="shrink-0 bg-gradient-to-r from-[#9ebef5] to-[#c4d8f9] to-60%">
        <MenuBar />
        <StandardBar />
        <div className="pt-px">
          <FormattingBar />
        </div>
        <FormulaBar />
      </div>
      <main className="flex min-h-0 flex-1 pl-px pt-px">
        <Sheet />
        <VerticalScroll />
      </main>
      <SheetTabs />
      <div className="shrink-0 border-t-2 border-white bg-gradient-to-r from-[#9ebef5] to-[#c4d8f9] to-60% pb-px">
        <DrawingBar />
      </div>
      <StatusBar />
      <Taskbar />
    </div>
  );
}
